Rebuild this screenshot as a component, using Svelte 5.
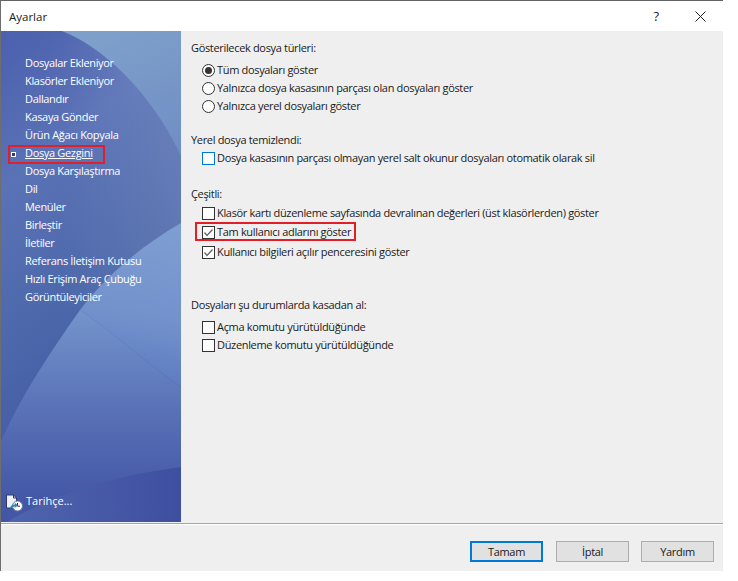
<script lang="ts">
const navItems = [
  'Dosyalar Ekleniyor',
  'Klasörler Ekleniyor',
  'Dallandır',
  'Kasaya Gönder',
  'Ürün Ağacı Kopyala',
  'Dosya Gezgini',
  'Dosya Karşılaştırma',
  'Dil',
  'Menüler',
  'Birleştir',
  'İletiler',
  'Referans İletişim Kutusu',
  'Hızlı Erişim Araç Çubuğu',
  'Görüntüleyiciler'
];
const selected = 'Dosya Gezgini';
const fileTypes = [
  { label: 'Tüm dosyaları göster', on: true },
  { label: 'Yalnızca dosya kasasının parçası olan dosyaları göster', on: false },
  { label: 'Yalnızca yerel dosyaları göster', on: false }
];
</script>

{#snippet check(label: string, on = false, focus = false)}
  <div class="opt">
    <span class="box" class:focus>
      {#if on}
        <svg width="13" height="13" viewBox="0 0 13 13"><path d="M2.5 6.5 5 9.5 10.5 3.5" fill="none" stroke="#666" stroke-width="1.3" /></svg>
      {/if}
    </span>
    <span class="lbl">{label}</span>
  </div>
{/snippet}

<div class="window">
  <header class="title">
    <span>Ayarlar</span>
    <div class="title-btns">
      <span class="help">?</span>
      <svg width="11" height="11" viewBox="0 0 11 11"><path d="M0.5 0.5 10.5 10.5M10.5 0.5 0.5 10.5" stroke="#222" stroke-width="1" fill="none" /></svg>
    </div>
  </header>

  <div class="main">
    <aside class="side">
      <svg class="side-bg" width="180" height="491" viewBox="0 0 180 491">
        <defs>
          <linearGradient id="base" x1="0" y1="0" x2="0.3" y2="1">
            <stop offset="0" stop-color="#4c60ae" />
            <stop offset="0.3" stop-color="#5a72b6" />
            <stop offset="0.6" stop-color="#4c68aa" />
            <stop offset="1" stop-color="#3f51a1" />
          </linearGradient>
          <linearGradient id="sheen" x1="60" y1="0" x2="180" y2="0" gradientUnits="userSpaceOnUse">
            <stop offset="0" stop-color="#fff" stop-opacity="0" />
            <stop offset="1" stop-color="#fff" stop-opacity="0.12" />
          </linearGradient>
          <linearGradient id="corner" x1="0.5" y1="0" x2="1" y2="1">
            <stop offset="0" stop-color="#7e9fca" />
            <stop offset="1" stop-color="#6f8dc4" />
          </linearGradient>
          <linearGradient id="lens" x1="0" y1="279" x2="0" y2="470" gradientUnits="userSpaceOnUse">
            <stop offset="0" stop-color="#7494cc" />
            <stop offset="0.55" stop-color="#5870b6" />
            <stop offset="1" stop-color="#4357a6" />
          </linearGradient>
          <linearGradient id="wedge" x1="1" y1="0" x2="0.9" y2="1">
            <stop offset="0" stop-color="#7f9ed2" />
            <stop offset="0.6" stop-color="#7392cc" />
            <stop offset="1" stop-color="#5d7bc0" />
          </linearGradient>
          <linearGradient id="foot-sweep" x1="0" y1="0" x2="1" y2="0">
            <stop offset="0" stop-color="#4f64ae" />
            <stop offset="1" stop-color="#3f4fa0" />
          </linearGradient>
        </defs>
        <rect width="180" height="491" fill="url(#base)" />
        <rect width="180" height="280" fill="url(#sheen)" />
        <path d="M61 0C100 15 150 60 180 125V0Z" fill="url(#corner)" />
        <path d="M79 279C50 320 20 365 0 410V491H180V356C150 335 110 300 79 279Z" fill="url(#lens)" />
        <path d="M79 279C105 245 140 215 180 192V356C150 335 110 300 79 279Z" fill="url(#wedge)" />
        <path d="M6 491C50 465 110 445 180 436V491Z" fill="url(#foot-sweep)" />
      </svg>
      <nav class="nav">
        {#each navItems as item}
          <div class="nav-item" class:selected={item === selected}>
            {#if item === selected}<span class="bullet"></span>{/if}
            {item}
          </div>
        {/each}
      </nav>
      <div class="history">
        <svg width="18" height="18" viewBox="0 0 18 18">
          <path d="M0.5 1H7.5L10.5 4V14H0.5Z" fill="#eef0f8" stroke="#2f3a66" />
          <path d="M7.5 1V4H10.5" fill="none" stroke="#2f3a66" />
          <circle cx="11.5" cy="12" r="5" fill="#fff" stroke="#6a78a6" />
          <path d="M11.5 9V12.2H14" fill="none" stroke="#333" />
          <path d="M3.5 15.5C4 12 6.5 10 9 10.5L8.5 8.5 12 11.5 8.5 14 9 12.5C7 12.5 5.5 13.5 3.5 15.5Z" fill="#2a86b8" />
        </svg>
        <span class="history-text">Tarihçe...</span>
      </div>
    </aside>

    <section class="content">
      <div class="group g1">
        <div class="heading">Gösterilecek dosya türleri:</div>
        {#each fileTypes as t}
          <div class="opt">
            <span class="radio" class:on={t.on}></span>
            <span class="lbl">{t.label}</span>
          </div>
        {/each}
      </div>

      <div class="group g2">
        <div class="heading">Yerel dosya temizlendi:</div>
        {@render check('Dosya kasasının parçası olmayan yerel salt okunur dosyaları otomatik olarak sil', false, true)}
      </div>

      <div class="group g3">
        <div class="heading">Çeşitli:</div>
        {@render check('Klasör kartı düzenleme sayfasında devralınan değerleri (üst klasörlerden) göster')}
        <div class="marked">
          {@render check('Tam kullanıcı adlarını göster', true)}
        </div>
        {@render check('Kullanıcı bilgileri açılır penceresini göster', true)}
      </div>

      <div class="group g4">
        <div class="heading">Dosyaları şu durumlarda kasadan al:</div>
        {@render check('Açma komutu yürütüldüğünde')}
        {@render check('Düzenleme komutu yürütüldüğünde')}
      </div>
    </section>
  </div>

  <footer class="foot">
    <button class="default">Tamam</button>
    <button>İptal</button>
    <button>Yardım</button>
  </footer>
</div>

<style>
:global(body) {
  margin: 0;
  background: #fff;
}
.window {
  width: 722px;
  height: 570px;
  border-top: 1px solid #646464;
  border-left: 1px solid #6e6e6e;
  display: flex;
  flex-direction: column;
  background: #efefef;
  font-family: "Open Sans", "Noto Sans", sans-serif;
  font-size: 11px;
  letter-spacing: -0.33px;
  color: #1a1a1a;
}
.title {
  height: 30px;
  flex: none;
  background: #fff;
  display: flex;
  align-items: center;
  justify-content: space-between;
  padding: 0 17px 0 8px;
  font-size: 11.5px;
  letter-spacing: 0;
}
.title-btns {
  display: flex;
  align-items: center;
  gap: 36px;
}
.help {
  font-size: 13px;
}
.main {
  flex: 1;
  display: flex;
  min-height: 0;
  border-bottom: 1px solid #a5a5a5;
}
.side {
  width: 180px;
  flex: none;
  position: relative;
  color: #fff;
  overflow: hidden;
}
.side-bg {
  position: absolute;
  inset: 0;
}
.nav {
  position: relative;
  padding: 23px 0 0 24px;
}
.nav-item {
  height: 18px;
  line-height: 18px;
  position: relative;
  white-space: nowrap;
}
.nav-item.selected {
  text-decoration: underline;
}
.nav-item.selected::after {
  content: '';
  position: absolute;
  left: -17px;
  top: 1px;
  width: 93px;
  height: 15px;
  border: 2px solid #e21f26;
}
.bullet {
  position: absolute;
  left: -14px;
  top: 8px;
  width: 3px;
  height: 3px;
  border: 1px solid #fff;
  background: #333c70;
}
.history {
  position: absolute;
  left: 5px;
  bottom: 11px;
  display: flex;
  align-items: center;
  gap: 2px;
  letter-spacing: 0;
}
.history-text {
  margin-bottom: 4px;
}
.content {
  flex: 1;
  padding: 8px 0 0 10px;
}
.heading {
  height: 18px;
  line-height: 18px;
  white-space: nowrap;
}
.g1 .heading,
.g4 .heading {
  margin-bottom: 4px;
}
.g3 .heading {
  margin-bottom: 1px;
}
.g2 {
  margin-top: 16px;
}
.g3 {
  margin-top: 18px;
}
.g4 {
  margin-top: 35px;
}
.opt {
  height: 18px;
  display: flex;
  align-items: center;
  gap: 2px;
  padding-left: 11px;
  white-space: nowrap;
}
.lbl {
  margin-bottom: 2px;
}
.radio {
  width: 11px;
  height: 11px;
  border: 1px solid #333;
  border-radius: 50%;
  background: #fff;
  position: relative;
  flex: none;
}
.radio.on::after {
  content: '';
  position: absolute;
  left: 2px;
  top: 2px;
  width: 7px;
  height: 7px;
  border-radius: 50%;
  background: #333;
}
.box {
  width: 11px;
  height: 11px;
  border: 1px solid #333;
  background: #fff;
  flex: none;
  display: flex;
}
.box svg {
  margin: -1px;
}
.box.focus {
  border-color: #0078d7;
}
.marked {
  position: relative;
  margin-top: 1px;
  margin-bottom: 2px;
}
.marked::after {
  content: '';
  position: absolute;
  left: 4px;
  top: -1px;
  width: 157px;
  height: 15px;
  border: 2px solid #e21f26;
}
.foot {
  flex: none;
  height: 47px;
  display: flex;
  justify-content: flex-end;
  align-items: flex-start;
  gap: 12px;
  padding: 16px 9px 0 0;
  box-sizing: border-box;
  border-top: 1px solid #fff;
}
button {
  width: 73px;
  height: 21px;
  box-sizing: border-box;
  border: 1px solid #adadad;
  background: #e1e1e1;
  font: inherit;
  letter-spacing: inherit;
  color: inherit;
  padding: 0;
}
button.default {
  border: 2px solid #0078d7;
  margin-right: 1px;
}
</style>
